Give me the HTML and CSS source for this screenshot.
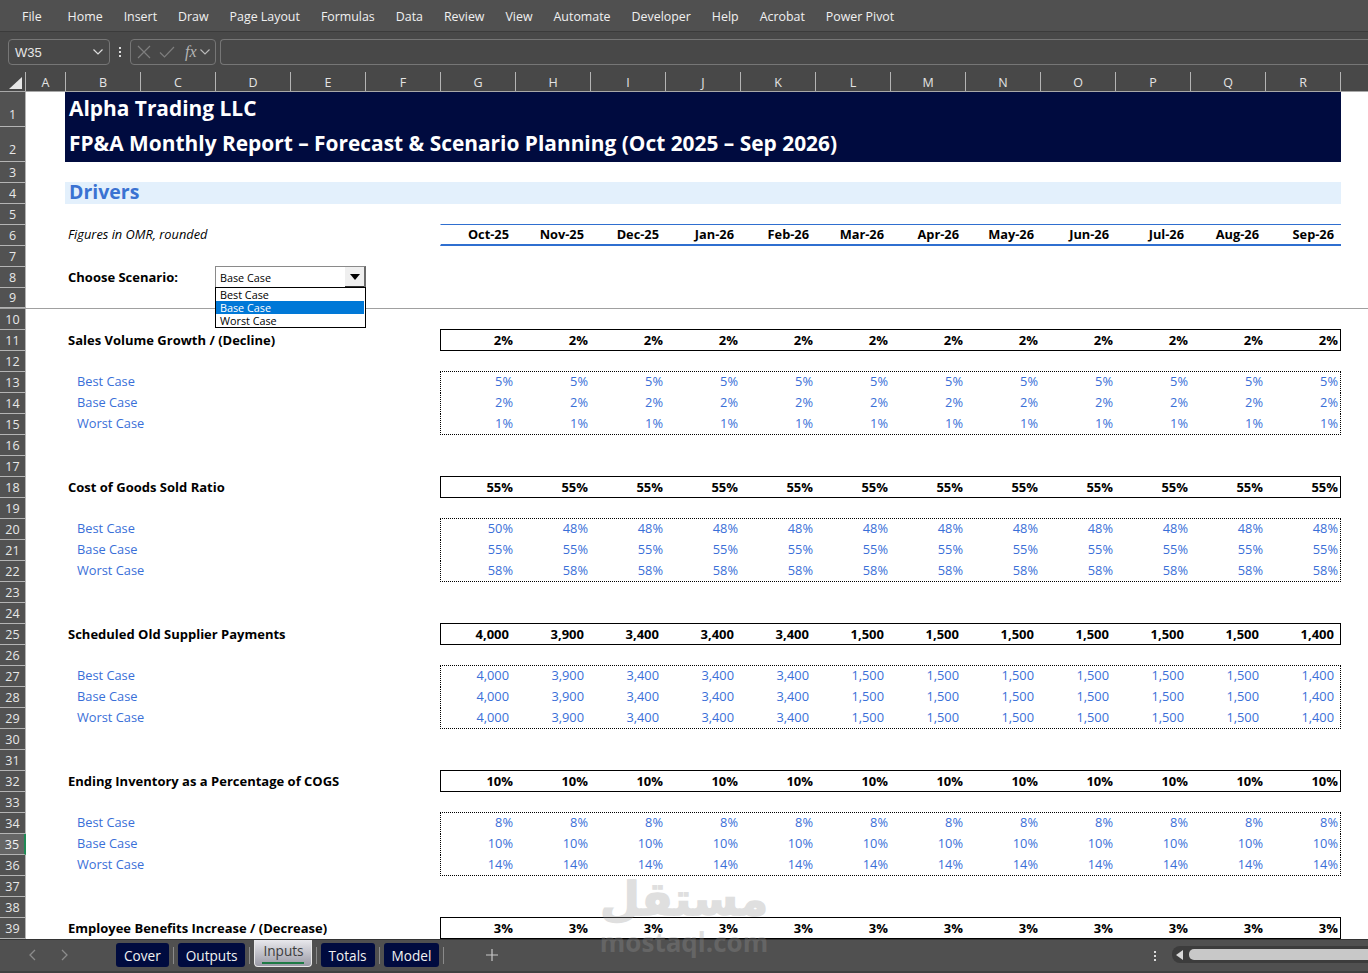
FILE: index.html
```html
<!DOCTYPE html>
<html lang="en">
<head>
<meta charset="utf-8">
<title>Alpha Trading LLC - Drivers</title>
<link rel="stylesheet" href="styles.css">
</head>
<body>
<div class="app">
  <nav class="ribbon">
    <span class="file">File</span><span>Home</span><span>Insert</span><span>Draw</span><span>Page Layout</span><span>Formulas</span><span>Data</span><span>Review</span><span>View</span><span>Automate</span><span>Developer</span><span>Help</span><span>Acrobat</span><span>Power Pivot</span>
  </nav>
  <div class="fbar">
    <div class="namebox"><span>W35</span>
      <svg width="12" height="8" viewBox="0 0 12 8"><path d="M1.5 1.5 6 6l4.5-4.5" fill="none" stroke="#ddd" stroke-width="1.2"/></svg>
    </div>
    <div class="vdots"><i></i><i></i><i></i></div>
    <div class="fxbox">
      <svg width="14" height="14" viewBox="0 0 14 14"><path d="M1 1l12 12M13 1 1 13" fill="none" stroke="#7e7e7e" stroke-width="1.2"/></svg>
      <svg width="16" height="14" viewBox="0 0 16 14"><path d="M1 7.5 5.5 12 15 2" fill="none" stroke="#7e7e7e" stroke-width="1.2"/></svg>
      <span class="fx">fx</span>
      <svg width="12" height="8" viewBox="0 0 12 8"><path d="M1.5 1.5 6 6l4.5-4.5" fill="none" stroke="#bbb" stroke-width="1.1"/></svg>
    </div>
    <div class="finput"></div>
  </div>
  <div class="colhead">
    <div class="corner"><svg width="14" height="14" viewBox="0 0 14 14"><path d="M13 1v12H0z" fill="#e8e8e8"/></svg></div>
    <div class="col a">A</div><div class="col">B</div><div class="col">C</div><div class="col">D</div><div class="col">E</div><div class="col">F</div><div class="col">G</div><div class="col">H</div><div class="col">I</div><div class="col">J</div><div class="col">K</div><div class="col">L</div><div class="col">M</div><div class="col">N</div><div class="col">O</div><div class="col">P</div><div class="col">Q</div><div class="col">R</div>
  </div>
  <main class="sheet">
    <div class="row tall"><div class="rh">1</div><div class="band title">Alpha Trading LLC</div></div>
    <div class="row tall"><div class="rh">2</div><div class="band title second">FP&amp;A Monthly Report – Forecast &amp; Scenario Planning (Oct 2025 – Sep 2026)</div></div>
    <div class="row"><div class="rh">3</div></div>
    <div class="row"><div class="rh">4</div><div class="band drivers">Drivers</div></div>
    <div class="row"><div class="rh">5</div></div>
    <div class="row"><div class="rh">6</div><div class="lab note">Figures in OMR, rounded</div>
      <div class="vals months"><span>Oct-25</span><span>Nov-25</span><span>Dec-25</span><span>Jan-26</span><span>Feb-26</span><span>Mar-26</span><span>Apr-26</span><span>May-26</span><span>Jun-26</span><span>Jul-26</span><span>Aug-26</span><span>Sep-26</span></div></div>
    <div class="row"><div class="rh">7</div></div>
    <div class="row combo-row"><div class="rh">8</div><div class="lab strong">Choose Scenario:</div>
      <div class="combo">
        <div class="combo-field"><span>Base Case</span><span class="combo-btn"><svg width="10" height="6" viewBox="0 0 10 6"><path d="M0 0h10L5 6z" fill="#000"/></svg></span></div>
        <ul class="combo-list"><li>Best Case</li><li class="on">Base Case</li><li>Worst Case</li></ul>
      </div>
    </div>
    <div class="row divider"><div class="rh">9</div></div>
    <div class="row"><div class="rh">10</div></div>
    <div class="row"><div class="rh">11</div><div class="lab strong">Sales Volume Growth / (Decline)</div>
      <div class="vals box"><span>2%</span><span>2%</span><span>2%</span><span>2%</span><span>2%</span><span>2%</span><span>2%</span><span>2%</span><span>2%</span><span>2%</span><span>2%</span><span>2%</span></div></div>
    <div class="row"><div class="rh">12</div></div>
    <div class="row"><div class="rh">13</div><div class="lab case">Best Case</div>
      <div class="vals input top"><span>5%</span><span>5%</span><span>5%</span><span>5%</span><span>5%</span><span>5%</span><span>5%</span><span>5%</span><span>5%</span><span>5%</span><span>5%</span><span>5%</span></div></div>
    <div class="row"><div class="rh">14</div><div class="lab case">Base Case</div>
      <div class="vals input mid"><span>2%</span><span>2%</span><span>2%</span><span>2%</span><span>2%</span><span>2%</span><span>2%</span><span>2%</span><span>2%</span><span>2%</span><span>2%</span><span>2%</span></div></div>
    <div class="row"><div class="rh">15</div><div class="lab case">Worst Case</div>
      <div class="vals input bot"><span>1%</span><span>1%</span><span>1%</span><span>1%</span><span>1%</span><span>1%</span><span>1%</span><span>1%</span><span>1%</span><span>1%</span><span>1%</span><span>1%</span></div></div>
    <div class="row"><div class="rh">16</div></div>
    <div class="row"><div class="rh">17</div></div>
    <div class="row"><div class="rh">18</div><div class="lab strong">Cost of Goods Sold Ratio</div>
      <div class="vals box"><span>55%</span><span>55%</span><span>55%</span><span>55%</span><span>55%</span><span>55%</span><span>55%</span><span>55%</span><span>55%</span><span>55%</span><span>55%</span><span>55%</span></div></div>
    <div class="row"><div class="rh">19</div></div>
    <div class="row"><div class="rh">20</div><div class="lab case">Best Case</div>
      <div class="vals input top"><span>50%</span><span>48%</span><span>48%</span><span>48%</span><span>48%</span><span>48%</span><span>48%</span><span>48%</span><span>48%</span><span>48%</span><span>48%</span><span>48%</span></div></div>
    <div class="row"><div class="rh">21</div><div class="lab case">Base Case</div>
      <div class="vals input mid"><span>55%</span><span>55%</span><span>55%</span><span>55%</span><span>55%</span><span>55%</span><span>55%</span><span>55%</span><span>55%</span><span>55%</span><span>55%</span><span>55%</span></div></div>
    <div class="row"><div class="rh">22</div><div class="lab case">Worst Case</div>
      <div class="vals input bot"><span>58%</span><span>58%</span><span>58%</span><span>58%</span><span>58%</span><span>58%</span><span>58%</span><span>58%</span><span>58%</span><span>58%</span><span>58%</span><span>58%</span></div></div>
    <div class="row"><div class="rh">23</div></div>
    <div class="row"><div class="rh">24</div></div>
    <div class="row"><div class="rh">25</div><div class="lab strong">Scheduled Old Supplier Payments</div>
      <div class="vals box num"><span>4,000</span><span>3,900</span><span>3,400</span><span>3,400</span><span>3,400</span><span>1,500</span><span>1,500</span><span>1,500</span><span>1,500</span><span>1,500</span><span>1,500</span><span>1,400</span></div></div>
    <div class="row"><div class="rh">26</div></div>
    <div class="row"><div class="rh">27</div><div class="lab case">Best Case</div>
      <div class="vals input top num"><span>4,000</span><span>3,900</span><span>3,400</span><span>3,400</span><span>3,400</span><span>1,500</span><span>1,500</span><span>1,500</span><span>1,500</span><span>1,500</span><span>1,500</span><span>1,400</span></div></div>
    <div class="row"><div class="rh">28</div><div class="lab case">Base Case</div>
      <div class="vals input mid num"><span>4,000</span><span>3,900</span><span>3,400</span><span>3,400</span><span>3,400</span><span>1,500</span><span>1,500</span><span>1,500</span><span>1,500</span><span>1,500</span><span>1,500</span><span>1,400</span></div></div>
    <div class="row"><div class="rh">29</div><div class="lab case">Worst Case</div>
      <div class="vals input bot num"><span>4,000</span><span>3,900</span><span>3,400</span><span>3,400</span><span>3,400</span><span>1,500</span><span>1,500</span><span>1,500</span><span>1,500</span><span>1,500</span><span>1,500</span><span>1,400</span></div></div>
    <div class="row"><div class="rh">30</div></div>
    <div class="row"><div class="rh">31</div></div>
    <div class="row"><div class="rh">32</div><div class="lab strong">Ending Inventory as a Percentage of COGS</div>
      <div class="vals box"><span>10%</span><span>10%</span><span>10%</span><span>10%</span><span>10%</span><span>10%</span><span>10%</span><span>10%</span><span>10%</span><span>10%</span><span>10%</span><span>10%</span></div></div>
    <div class="row"><div class="rh">33</div></div>
    <div class="row"><div class="rh">34</div><div class="lab case">Best Case</div>
      <div class="vals input top"><span>8%</span><span>8%</span><span>8%</span><span>8%</span><span>8%</span><span>8%</span><span>8%</span><span>8%</span><span>8%</span><span>8%</span><span>8%</span><span>8%</span></div></div>
    <div class="row"><div class="rh active">35</div><div class="lab case">Base Case</div>
      <div class="vals input mid"><span>10%</span><span>10%</span><span>10%</span><span>10%</span><span>10%</span><span>10%</span><span>10%</span><span>10%</span><span>10%</span><span>10%</span><span>10%</span><span>10%</span></div></div>
    <div class="row"><div class="rh">36</div><div class="lab case">Worst Case</div>
      <div class="vals input bot"><span>14%</span><span>14%</span><span>14%</span><span>14%</span><span>14%</span><span>14%</span><span>14%</span><span>14%</span><span>14%</span><span>14%</span><span>14%</span><span>14%</span></div></div>
    <div class="row"><div class="rh">37</div></div>
    <div class="row"><div class="rh">38</div></div>
    <div class="row"><div class="rh">39</div><div class="lab strong">Employee Benefits Increase / (Decrease)</div>
      <div class="vals box"><span>3%</span><span>3%</span><span>3%</span><span>3%</span><span>3%</span><span>3%</span><span>3%</span><span>3%</span><span>3%</span><span>3%</span><span>3%</span><span>3%</span></div></div>
  </main>
  <footer class="tabs">
    <div class="nav">
      <svg width="8" height="12" viewBox="0 0 8 12"><path d="M7 1 2 6l5 5" fill="none" stroke="#8c8c8c" stroke-width="1.3"/></svg>
      <svg width="8" height="12" viewBox="0 0 8 12"><path d="m1 1 5 5-5 5" fill="none" stroke="#8c8c8c" stroke-width="1.3"/></svg>
    </div>
    <div class="tablist">
      <span class="tab">Cover</span><i class="sep"></i>
      <span class="tab">Outputs</span><i class="sep"></i>
      <span class="tab current">Inputs</span><i class="sep"></i>
      <span class="tab">Totals</span><i class="sep"></i>
      <span class="tab">Model</span><i class="sep"></i>
    </div>
    <svg class="plus" width="12" height="12" viewBox="0 0 12 12"><path d="M6 0v12M0 6h12" stroke="#c8c8c8" stroke-width="1.2"/></svg>
    <div class="vdots hdots"><i></i><i></i><i></i></div>
    <div class="scroll">
      <svg width="8" height="10" viewBox="0 0 8 10"><path d="M7 0v10L0 5z" fill="#d8d8d8"/></svg>
      <div class="thumb"></div>
    </div>
  </footer>
  <div class="wm"><div class="wm-ar">مستقل</div><div class="wm-en">mostaql.com</div></div>
</div>
</body>
</html>
```
FILE: styles.css
```css
* { box-sizing: border-box; }
html, body { margin: 0; height: 100%; overflow: hidden; }
body { font-family: "Open Sans", "Liberation Sans", sans-serif; font-size: 12.8px; color: #000; background: #fff; }
.app { position: relative; display: flex; flex-direction: column; width: 1368px; height: 973px; overflow: hidden; }

.ribbon { flex: none; height: 32px; display: flex; align-items: center; gap: 21px; padding: 1px 0 0 22px; background: #505050; border-bottom: 1px solid #3b3b3b; color: #f0f0f0; font-size: 12.4px; }
.ribbon .file { margin-right: 5px; }

.fbar { flex: none; height: 40px; display: flex; align-items: flex-start; padding: 7px 0 0 8px; background: #484848; }
.namebox { width: 102px; height: 26px; display: flex; align-items: center; justify-content: space-between; padding: 0 5px 0 6px; border: 1px solid #767676; border-radius: 4px; color: #e6e6e6; font: 13px "Liberation Sans", sans-serif; }
.vdots { width: 20px; height: 26px; display: flex; flex-direction: column; align-items: center; justify-content: center; gap: 2px; }
.vdots i { width: 2px; height: 2px; background: #dcdcdc; }
.fxbox { width: 86px; height: 26px; display: flex; align-items: center; gap: 8px; padding-left: 6px; border: 1px solid #767676; border-radius: 4px; }
.fxbox .fx { font: italic 16px "Liberation Serif", serif; color: #b5b5b5; margin-left: 2px; margin-right: -6px; }
.finput { flex: 1; height: 26px; margin-left: 4px; border: 1px solid #767676; border-right: 0; border-radius: 4px 0 0 4px; }

.colhead { flex: none; height: 20px; display: flex; background: #484848; border-bottom: 1px solid #a8a8a8; }
.corner { width: 26px; display: flex; justify-content: flex-end; align-items: flex-end; padding: 0 2px 1px 0; border-right: 1px solid #b4b4b4; }
.col { width: 75px; display: flex; align-items: flex-end; justify-content: center; color: #e4e4e4; font-size: 12.5px; line-height: 17px; border-right: 1px solid #b4b4b4; }
.col.a { width: 40px; }

.sheet { flex: 1; min-height: 0; overflow: hidden; background: #fff; }
.row { display: flex; height: 21px; }
.row.tall { height: 35px; }
.rh { flex: none; width: 26px; display: flex; align-items: center; justify-content: center; background: #525252; color: #e8e8e8; font-size: 12.5px; border-right: 1px solid #b4b4b4; border-bottom: 1px solid #b4b4b4; }
.tall .rh { align-items: flex-end; padding-bottom: 3px; }
.rh.active { background: #666; color: #f4f4f4; border-right: 2px solid #1f8a55; }

.band { flex: none; width: 1276px; margin-left: 39px; padding-left: 4px; display: flex; align-items: center; }
.title { background: #000b3f; color: #fff; font-size: 20.9px; font-weight: 700; padding-bottom: 4px; }
.title.second { padding-bottom: 3px; }
.drivers { background: #e3f0fc; color: #3a72d2; font-size: 19.5px; font-weight: 700; height: 22px; margin-top: -1px; padding-bottom: 3px; }

.lab { flex: none; width: 414px; padding-left: 42px; line-height: 18px; }
.note { font-style: italic; }
.strong { font-weight: 700; font-size: 13px; line-height: 20px; }
.case { padding-left: 51px; color: #3a6fd8; }

.vals { flex: none; width: 901px; height: 21px; display: grid; grid-template-columns: 74px repeat(11, 75px); border: 1px solid transparent; line-height: 20px; text-align: right; }
.vals span { padding-right: 2px; }
.vals.num span, .vals.months span { padding-right: 6px; }
.vals.box { height: 22px; margin-top: -1px; border: 1px solid #000; font-weight: 700; font-size: 13px; }
.vals.input { color: #3a6fd8; line-height: 18px; }
.vals.top { height: 22px; margin-top: -1px; border: 1px dotted #000; border-bottom: 0; }
.vals.mid { border: 0; border-left: 1px dotted #000; border-right: 1px dotted #000; }
.vals.bot { border: 1px dotted #000; border-top: 0; }
.vals.months { height: 22px; margin-top: -1px; border: 0; border-top: 1px solid #2f6fd0; border-bottom: 2px solid #2f6fd0; border-left: 1px solid transparent; font-weight: 700; line-height: 18px; }

.combo-row { position: relative; }
.combo { position: absolute; left: 215px; top: -1px; width: 151px; z-index: 2; font-size: 10.8px; line-height: 13px; background: #fff; }
.combo-field { height: 21px; display: flex; align-items: center; justify-content: space-between; padding-left: 4px; border: 1px solid #8a8a8a; border-bottom: 0; border-right: 2px solid #6a6a6a; }
.combo-btn { width: 19px; height: 20px; display: flex; align-items: center; justify-content: center; background: #efefef; border-bottom: 1px solid #333; }
.combo-list { list-style: none; margin: 0; padding: 0 1px 0 0; height: 41px; border: 1px solid #000; }
.combo-list li { height: 13px; padding-left: 4px; }
.combo-list .on { background: #0078d7; color: #fff; }

.divider { border-bottom: 1px solid #a0a0a0; }

.tabs { flex: none; height: 34px; display: flex; align-items: flex-start; background: #505050; border-top: 1px solid #333; border-bottom: 2px solid #404040; }
.nav { width: 116px; height: 30px; display: flex; align-items: center; gap: 25px; padding-left: 28px; }
.tablist { width: 336px; display: flex; align-items: flex-start; }
.tab { height: 24px; margin-top: 3px; padding: 0 8px; display: flex; align-items: center; background: #000b3f; color: #f2f2f2; border-radius: 3px; font-size: 13.6px; }
.tab.current { height: 27px; margin-top: 0; padding: 0 7px 5px 8px; background: linear-gradient(#e8e8ec, #9a9aa6); color: #3c3c3c; border: 1px solid #e8e8e8; border-top: 0; border-radius: 0 0 4px 4px; position: relative; }
.tab.current::after { content: ""; position: absolute; left: 7px; right: 7px; bottom: 2px; height: 2px; background: #1e7a45; }
.sep { width: 1px; height: 17px; margin: 7px 4px 0; background: #8a8a8a; }
.plus { margin: 9px 0 0 34px; }
.hdots { margin: 3px 0 0 647px; }
.scroll { flex: 1; height: 17px; margin: 6px 0 0 7px; display: flex; align-items: center; gap: 5px; padding-left: 4px; background: #3c3c3c; border-radius: 8px 0 0 8px; }
.thumb { flex: 1; height: 11px; background: #c8c8c8; border-radius: 5px 0 0 5px; }

.wm { position: absolute; left: 590px; top: 868px; width: 188px; z-index: 3; text-align: center; color: #969696; opacity: .3; pointer-events: none; }
.wm-ar { font: 700 46px/62px "DejaVu Sans", sans-serif; -webkit-text-stroke: 1.5px #969696; }
.wm-en { font: 700 26px/28px "Open Sans", sans-serif; margin-top: -2px; }
```
